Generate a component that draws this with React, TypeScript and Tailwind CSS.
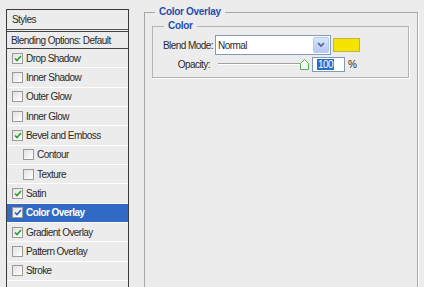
import React from "react";

type Item = { label: string; checked: boolean; indent?: boolean; selected?: boolean };

const items: Item[] = [
  { label: "Drop Shadow", checked: true },
  { label: "Inner Shadow", checked: false },
  { label: "Outer Glow", checked: false },
  { label: "Inner Glow", checked: false },
  { label: "Bevel and Emboss", checked: true },
  { label: "Contour", checked: false, indent: true },
  { label: "Texture", checked: false, indent: true },
  { label: "Satin", checked: true },
  { label: "Color Overlay", checked: true, selected: true },
  { label: "Gradient Overlay", checked: true },
  { label: "Pattern Overlay", checked: false },
  { label: "Stroke", checked: false },
  { label: "", checked: false },
];

function Check({ checked, selected }: { checked: boolean; selected?: boolean }) {
  return (
    <div className="w-[11px] h-[11px] shrink-0 border border-[#9a9a9a] bg-gradient-to-br from-[#e2e2e2] to-white flex items-center justify-center">
      {checked && (
        <svg width="8" height="7" viewBox="0 0 8 7">
          <path d="M1 3.5 L3 5.5 L7 1" fill="none" stroke={selected ? "#2a62c0" : "#24a124"} strokeWidth="1.6" />
        </svg>
      )}
    </div>
  );
}

export default function App() {
  return (
    <div
      className="w-[424px] h-[287px] overflow-hidden bg-[#ececec] flex items-start pt-[6px] pl-[6px] text-[10px] text-[#2a2a2a] tracking-[-0.55px]"
      style={{ fontFamily: '"Liberation Sans", Arial, sans-serif' }}
    >
      {/* Styles list */}
      <div className="mt-[3px] w-[123px] h-[300px] shrink-0 border border-[#3c3c3c] bg-[#ececec] flex flex-col">
        <div className="h-[20px] border-b border-[#555] px-[5px] flex items-center">Styles</div>
        <div className="h-[1px]" />
        <div className="h-[18px] border-y border-[#444] px-[4px] flex items-center">Blending Options: Default</div>
        {items.map((it, i) => (
          <div
            key={i}
            className={`h-[19.35px] shrink-0 flex items-center gap-[3px] border-b border-white ${
              it.indent ? "pl-[16px]" : "pl-[5px]"
            } ${it.selected ? "bg-[#316ac5] text-white font-bold" : ""}`}
          >
            {it.label && <Check checked={it.checked} selected={it.selected} />}
            <span>{it.label}</span>
          </div>
        ))}
      </div>

      {/* Options */}
      <fieldset className="ml-[15px] w-[274px] h-[300px] shrink-0 border border-[#a8a8a8] shadow-[1px_1px_0_#fff] pl-[7px] pr-[8px] pt-[2px]">
        <legend className="ml-[3px] px-[4px] leading-[12px] font-bold text-[#1f4fae] tracking-[-0.3px]">Color Overlay</legend>
        <fieldset className="border border-[#b4b4b4] shadow-[1px_1px_0_#fff] pl-[7px] pt-[3px] pb-[5px]">
          <legend className="ml-[4px] px-[4px] leading-[12px] font-bold text-[#1f4fae] tracking-[-0.3px]">Color</legend>
          <div className="h-[20px] flex items-center">
            <span className="w-[53px] text-right">Blend Mode:</span>
            <div className="ml-[2px] w-[116px] h-[20px] border border-[#7f9db9] bg-white flex items-center justify-between pl-[2px] pr-[1px]">
              <span>Normal</span>
              <div className="w-[16px] h-[16px] rounded-[2px] border border-[#b6c8f0] bg-gradient-to-b from-[#dbe6fd] to-[#b5c9f5] flex items-center justify-center">
                <svg width="8" height="6" viewBox="0 0 8 6">
                  <path d="M1 1 L4 4 L7 1" fill="none" stroke="#4d6185" strokeWidth="1.6" />
                </svg>
              </div>
            </div>
            <div className="ml-[2px] w-[27px] h-[14px] bg-[#f4e400] border border-[#c2b24a]" />
          </div>
          <div className="mt-[1px] h-[16px] flex items-center">
            <span className="w-[50px] text-right">Opacity:</span>
            <div className="ml-[8px] w-[83px] h-[2px] border-t border-[#a0a0a0] border-b border-b-white" />
            <svg width="9" height="11" viewBox="0 0 9 11" className="-ml-[1px]">
              <path d="M0.5 10.5 V4.5 L4.5 0.5 L8.5 4.5 V10.5 Z" fill="#f4f4f4" stroke="#5aa85a" />
            </svg>
            <div className="ml-[3px] w-[33px] h-[15px] border border-[#7f9db9] bg-white flex items-center pl-[4px]">
              <span className="bg-[#316ac5] text-white leading-[11px] px-[1px]">100</span>
            </div>
            <span className="ml-[3px]">%</span>
          </div>
        </fieldset>
      </fieldset>
    </div>
  );
}
